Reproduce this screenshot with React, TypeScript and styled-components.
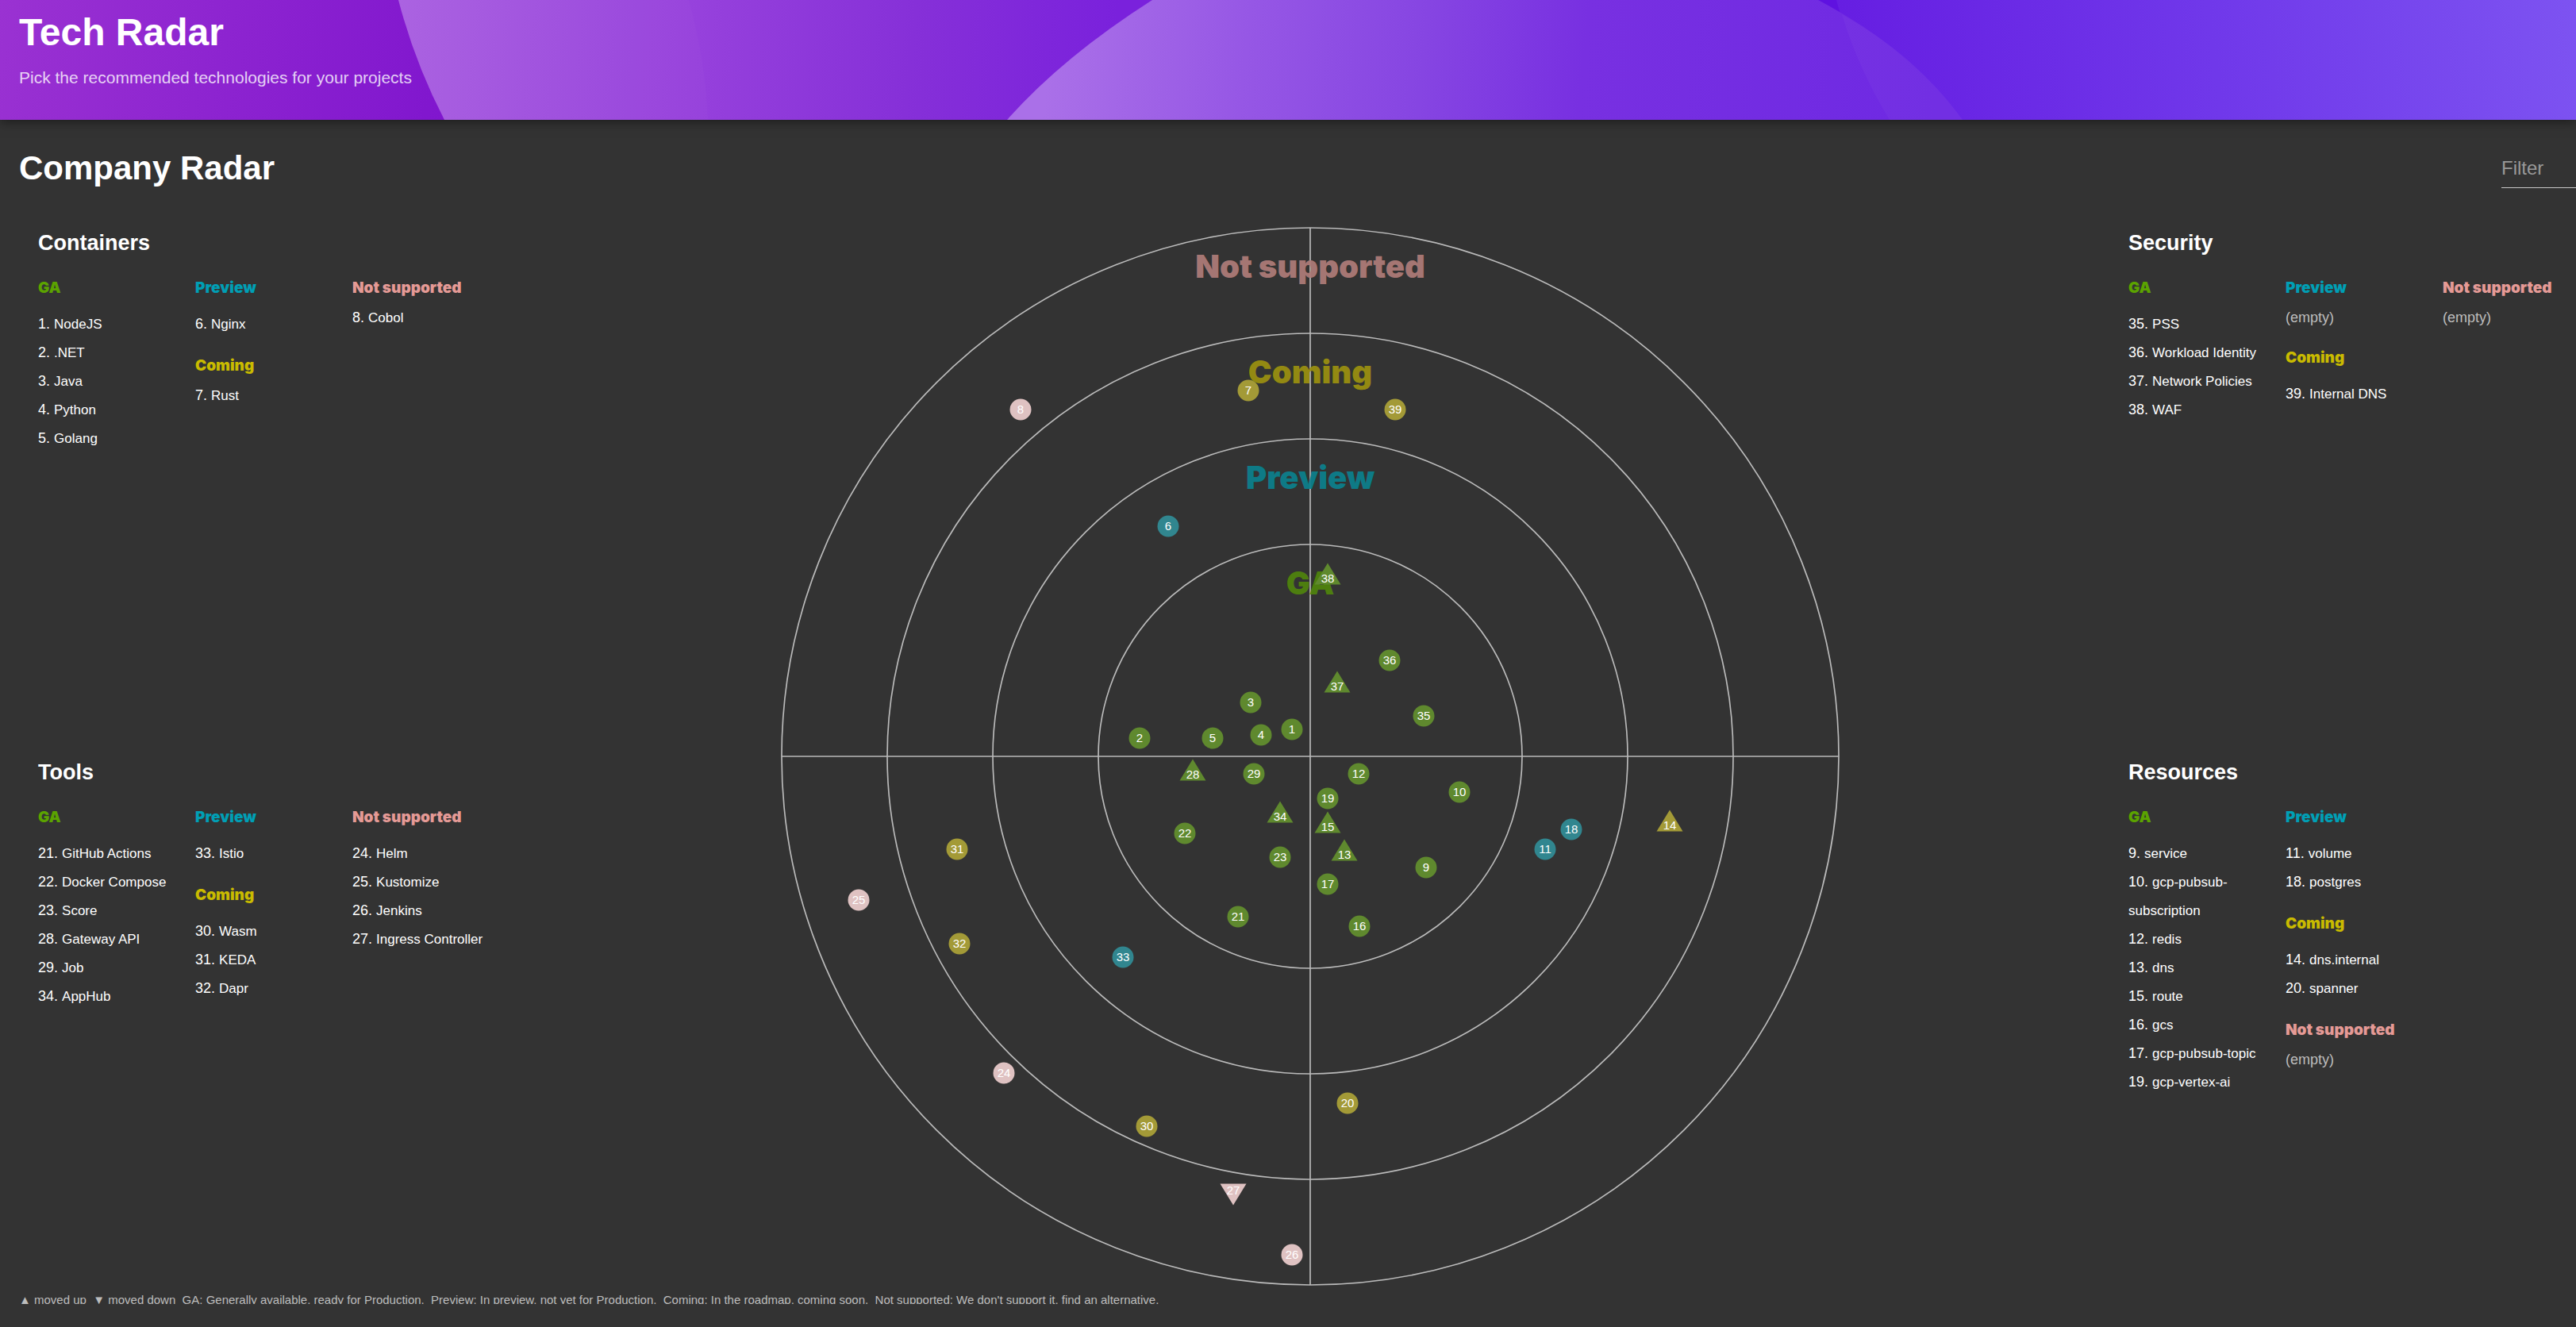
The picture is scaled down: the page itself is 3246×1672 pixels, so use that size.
import React, { useState } from 'react';
import styled, { createGlobalStyle } from 'styled-components';

const GlobalStyle = createGlobalStyle`
  * { box-sizing: border-box; }
  body {
    margin: 0;
    background: #333333;
    color: #ffffff;
    font-family: "Liberation Sans", Arial, Helvetica, sans-serif;
  }
  h1, h2, h3, h4, p, ol { margin: 0; padding: 0; }
`;

type Ring = 'ga' | 'preview' | 'coming' | 'unsupported';
type Move = 'up' | 'down';

const rings: Record<Ring, { name: string; color: string; label: string; blip: string; radius: number }> = {
  unsupported: { name: 'Not supported', color: '#e59a96', label: '#ad7b78', blip: '#dfc2c2', radius: 666 },
  coming: { name: 'Coming', color: '#c9bb00', label: '#9a8f10', blip: '#a39a37', radius: 533 },
  preview: { name: 'Preview', color: '#009fb5', label: '#0c7f8c', blip: '#31868f', radius: 400 },
  ga: { name: 'GA', color: '#5ba300', label: '#4f840d', blip: '#5f892e', radius: 267 },
};

/* ---------- data ---------- */

interface Group {
  ring: Ring;
  items: [number, string][];
  tight?: boolean;
}
interface Quadrant {
  name: string;
  columns: Group[][];
}

const containers: Quadrant = {
  name: 'Containers',
  columns: [
    [{ ring: 'ga', items: [[1, 'NodeJS'], [2, '.NET'], [3, 'Java'], [4, 'Python'], [5, 'Golang']] }],
    [
      { ring: 'preview', items: [[6, 'Nginx']] },
      { ring: 'coming', items: [[7, 'Rust']], tight: true },
    ],
    [{ ring: 'unsupported', items: [[8, 'Cobol']], tight: true }],
  ],
};

const tools: Quadrant = {
  name: 'Tools',
  columns: [
    [
      {
        ring: 'ga',
        items: [[21, 'GitHub Actions'], [22, 'Docker Compose'], [23, 'Score'], [28, 'Gateway API'], [29, 'Job'], [34, 'AppHub']],
      },
    ],
    [
      { ring: 'preview', items: [[33, 'Istio']] },
      { ring: 'coming', items: [[30, 'Wasm'], [31, 'KEDA'], [32, 'Dapr']] },
    ],
    [{ ring: 'unsupported', items: [[24, 'Helm'], [25, 'Kustomize'], [26, 'Jenkins'], [27, 'Ingress Controller']] }],
  ],
};

const security: Quadrant = {
  name: 'Security',
  columns: [
    [{ ring: 'ga', items: [[35, 'PSS'], [36, 'Workload Identity'], [37, 'Network Policies'], [38, 'WAF']] }],
    [
      { ring: 'preview', items: [] },
      { ring: 'coming', items: [[39, 'Internal DNS']] },
    ],
    [{ ring: 'unsupported', items: [] }],
  ],
};

const resources: Quadrant = {
  name: 'Resources',
  columns: [
    [
      {
        ring: 'ga',
        items: [
          [9, 'service'],
          [10, 'gcp-pubsub-subscription'],
          [12, 'redis'],
          [13, 'dns'],
          [15, 'route'],
          [16, 'gcs'],
          [17, 'gcp-pubsub-topic'],
          [19, 'gcp-vertex-ai'],
        ],
      },
    ],
    [
      { ring: 'preview', items: [[11, 'volume'], [18, 'postgres']] },
      { ring: 'coming', items: [[14, 'dns.internal'], [20, 'spanner']] },
      { ring: 'unsupported', items: [] },
    ],
    [],
  ],
};

/* Blip positions, relative to the centre of the radar. */
const blips: { id: number; ring: Ring; x: number; y: number; move?: Move }[] = [
  { id: 1, ring: 'ga', x: -23, y: -34 },
  { id: 2, ring: 'ga', x: -215, y: -23 },
  { id: 3, ring: 'ga', x: -75, y: -68 },
  { id: 4, ring: 'ga', x: -62, y: -27 },
  { id: 5, ring: 'ga', x: -123, y: -23 },
  { id: 6, ring: 'preview', x: -179, y: -290 },
  { id: 7, ring: 'coming', x: -78, y: -461 },
  { id: 8, ring: 'unsupported', x: -365, y: -437 },
  { id: 9, ring: 'ga', x: 146, y: 140 },
  { id: 10, ring: 'ga', x: 188, y: 45 },
  { id: 11, ring: 'preview', x: 296, y: 117 },
  { id: 12, ring: 'ga', x: 61, y: 22 },
  { id: 13, ring: 'ga', x: 43, y: 118, move: 'up' },
  { id: 14, ring: 'coming', x: 453, y: 81, move: 'up' },
  { id: 15, ring: 'ga', x: 22, y: 83, move: 'up' },
  { id: 16, ring: 'ga', x: 62, y: 214 },
  { id: 17, ring: 'ga', x: 22, y: 161 },
  { id: 18, ring: 'preview', x: 329, y: 92 },
  { id: 19, ring: 'ga', x: 22, y: 53 },
  { id: 20, ring: 'coming', x: 47, y: 437 },
  { id: 21, ring: 'ga', x: -91, y: 202 },
  { id: 22, ring: 'ga', x: -158, y: 97 },
  { id: 23, ring: 'ga', x: -38, y: 127 },
  { id: 24, ring: 'unsupported', x: -386, y: 399 },
  { id: 25, ring: 'unsupported', x: -569, y: 181 },
  { id: 26, ring: 'unsupported', x: -23, y: 628 },
  { id: 27, ring: 'unsupported', x: -97, y: 552, move: 'down' },
  { id: 28, ring: 'ga', x: -148, y: 17, move: 'up' },
  { id: 29, ring: 'ga', x: -71, y: 22 },
  { id: 30, ring: 'coming', x: -206, y: 466 },
  { id: 31, ring: 'coming', x: -445, y: 117 },
  { id: 32, ring: 'coming', x: -442, y: 236 },
  { id: 33, ring: 'preview', x: -236, y: 253 },
  { id: 34, ring: 'ga', x: -38, y: 70, move: 'up' },
  { id: 35, ring: 'ga', x: 143, y: -51 },
  { id: 36, ring: 'ga', x: 100, y: -121 },
  { id: 37, ring: 'ga', x: 34, y: -94, move: 'up' },
  { id: 38, ring: 'ga', x: 22, y: -230, move: 'up' },
  { id: 39, ring: 'coming', x: 107, y: -437 },
];

/* ---------- styled parts ---------- */

const Page = styled.div`
  display: flex;
  flex-direction: column;
  min-height: 100vh;
`;

const Header = styled.header`
  position: relative;
  height: 151px;
  padding: 16px 24px;
  background: #7a22dc;
  box-shadow: 0 2px 14px rgba(0, 0, 0, 0.5);
`;

const HeaderArt = styled.svg`
  position: absolute;
  inset: 0;
  width: 100%;
  height: 100%;
`;

const HeaderText = styled.div`
  position: relative;
  display: flex;
  flex-direction: column;
  gap: 16px;
`;

const PageTitle = styled.h1`
  font-size: 48px;
  line-height: 50px;
`;

const Subtitle = styled.p`
  color: rgba(255, 255, 255, 0.8);
  font-size: 21px;
  line-height: 32px;
`;

const Content = styled.main`
  display: flex;
  flex-direction: column;
`;

const TitleBar = styled.div`
  display: flex;
  justify-content: space-between;
  align-items: flex-end;
  margin-top: 36px;
  padding-left: 24px;
`;

const ContentTitle = styled.h2`
  font-size: 42px;
  line-height: 50px;
`;

const FilterLabel = styled.label`
  display: block;
  width: 94px;
`;

const FilterInput = styled.input`
  display: block;
  width: 100%;
  height: 50px;
  padding: 0;
  border: 0;
  border-bottom: 1px solid #c6c6c6;
  border-radius: 0;
  outline: 0;
  background: transparent;
  color: #ffffff;
  font-family: inherit;
  font-size: 24px;
  &::placeholder {
    color: #999999;
    opacity: 1;
  }
`;

const RadarLayout = styled.section`
  display: grid;
  grid-template-columns: 620px minmax(0, 1fr) 564px;
  margin-top: 49px;
`;

const Legend = styled.div<{ $inset?: boolean }>`
  display: grid;
  grid-template-rows: 1fr 1fr;
  padding-left: ${(p) => (p.$inset ? '48px' : '0')};
`;

const QuadrantBox = styled.section`
  min-height: 0;
`;

const QuadrantTitle = styled.h3`
  font-size: 27px;
  line-height: 40px;
`;

const Columns = styled.div`
  display: grid;
  grid-template-columns: repeat(3, 198px);
  margin-top: 26px;
`;

const Column = styled.div`
  display: flex;
  flex-direction: column;
  gap: 24px;
  padding-right: 12px;
`;

const RingTitle = styled.h4<{ $color: string }>`
  color: ${(p) => p.$color};
  font-family: Inter, "Liberation Sans", sans-serif;
  font-size: 19px;
  font-weight: 900;
  line-height: 22px;
  white-space: nowrap;
`;

const List = styled.ol<{ $tight?: boolean }>`
  margin-top: ${(p) => (p.$tight ? '8px' : '16px')};
  list-style: none;
  font-size: 18px;
  line-height: 36px;
`;

const EntryName = styled.span`
  font-size: 17px;
  line-height: 1;
`;

const Empty = styled.p`
  margin-top: 10px;
  color: #bdbdbd;
  font-size: 18px;
  line-height: 32px;
`;

const Radar = styled.svg`
  display: block;
  justify-self: center;
  width: 100%;
  max-width: 1334px;
  height: auto;
`;

const RingLabel = styled.text`
  font-family: Inter, "Liberation Sans", sans-serif;
  font-size: 40px;
  font-weight: 900;
  text-anchor: middle;
`;

const BlipNumber = styled.text`
  fill: #ffffff;
  font-size: 15px;
  text-anchor: middle;
`;

const Notes = styled.footer`
  height: 16px;
  margin: 7px 24px 0;
  overflow: hidden;
  color: #bdbdbd;
  font-size: 15px;
  line-height: 22px;
  white-space: pre;
`;

/* ---------- components ---------- */

function HeaderBackground() {
  return (
    <HeaderArt viewBox="0 0 3246 151" preserveAspectRatio="none" aria-hidden="true">
      <defs>
        <linearGradient id="base" gradientUnits="userSpaceOnUse" x1="0" y1="0" x2="560" y2="140">
          <stop offset="0" stopColor="#9a32d2" />
          <stop offset="1" stopColor="#8016ce" />
        </linearGradient>
        <linearGradient id="first" gradientUnits="userSpaceOnUse" x1="500" y1="0" x2="1400" y2="100">
          <stop offset="0" stopColor="#aa60e1" />
          <stop offset="0.42" stopColor="#9641dc" />
          <stop offset="0.72" stopColor="#8630d8" />
          <stop offset="1" stopColor="#7a21dc" />
        </linearGradient>
        <linearGradient id="second" gradientUnits="userSpaceOnUse" x1="1330" y1="0" x2="2440" y2="120">
          <stop offset="0" stopColor="#aa70e8" />
          <stop offset="0.22" stopColor="#9657e5" />
          <stop offset="0.42" stopColor="#8645e2" />
          <stop offset="0.6" stopColor="#7830e1" />
          <stop offset="1" stopColor="#6e29e3" />
        </linearGradient>
        <linearGradient id="third" gradientUnits="userSpaceOnUse" x1="2330" y1="120" x2="3246" y2="0">
          <stop offset="0" stopColor="#661ee2" />
          <stop offset="0.5" stopColor="#7038ea" />
          <stop offset="1" stopColor="#7d53f1" />
        </linearGradient>
      </defs>
      <rect width="700" height="151" fill="url(#base)" />
      <path d="M502 0 Q523 80 560 151 H1500 V0 Z" fill="url(#first)" />
      <path d="M502 0 Q523 80 560 151 H892 Q889 75 868 0 Z" fill="#ffffff" fillOpacity="0.02" />
      <path d="M2270 0 H3246 V151 H2360 Z" fill="#5f12e0" />
      <path d="M2314 0 Q2335 80 2381 151 H3246 V0 Z" fill="url(#third)" />
      <path d="M1452 0 Q1339 72 1269 151 H2473 Q2408 62 2291 0 Z" fill="url(#second)" />
      <path d="M2321 18 Q2341 85 2381 151 H2473 Q2415 70 2321 18 Z" fill="#ffffff" fillOpacity="0.03" />
    </HeaderArt>
  );
}

function RingGroup({ group }: { group: Group }) {
  const ring = rings[group.ring];
  return (
    <div>
      <RingTitle $color={ring.color}>{ring.name}</RingTitle>
      {group.items.length === 0 ? (
        <Empty>(empty)</Empty>
      ) : (
        <List $tight={group.tight}>
          {group.items.map(([id, name]) => (
            <li key={id}>
              {id}. <EntryName>{name}</EntryName>
            </li>
          ))}
        </List>
      )}
    </div>
  );
}

function QuadrantLegend({ quadrant }: { quadrant: Quadrant }) {
  return (
    <QuadrantBox>
      <QuadrantTitle>{quadrant.name}</QuadrantTitle>
      <Columns>
        {quadrant.columns.map((groups, i) => (
          <Column key={i}>
            {groups.map((g) => (
              <RingGroup key={g.ring} group={g} />
            ))}
          </Column>
        ))}
      </Columns>
    </QuadrantBox>
  );
}

function RadarPlot() {
  const order: Ring[] = ['unsupported', 'coming', 'preview', 'ga'];
  return (
    <Radar viewBox="-667 -667 1334 1334" role="img" aria-label="Company Radar">
      <g fill="none" stroke="#bbbbbb" strokeWidth="1.67">
        {order.map((r) => (
          <circle key={r} r={rings[r].radius} />
        ))}
        <path d="M0 -666 V666 M-666 0 H666" />
      </g>
      {order.map((r) => (
        <RingLabel key={r} y={63 - rings[r].radius} fill={rings[r].label} fillOpacity="0.95">
          {rings[r].name}
        </RingLabel>
      ))}
      {blips.map((b) => (
        <g key={b.id} transform={`translate(${b.x} ${b.y})`}>
          {!b.move && <circle r="13.5" fill={rings[b.ring].blip} />}
          {b.move === 'up' && <path d="M0 -13.5 L16.5 13.5 H-16.5 Z" fill={rings[b.ring].blip} />}
          {b.move === 'down' && <path d="M0 13.5 L16.5 -13.5 H-16.5 Z" fill={rings[b.ring].blip} />}
          <BlipNumber y={b.move === 'up' ? 11 : b.move === 'down' ? 0 : 5}>{b.id}</BlipNumber>
        </g>
      ))}
    </Radar>
  );
}

export default function App() {
  const [filter, setFilter] = useState('');
  return (
    <Page>
      <GlobalStyle />
      <Header>
        <HeaderBackground />
        <HeaderText>
          <PageTitle>Tech Radar</PageTitle>
          <Subtitle>Pick the recommended technologies for your projects</Subtitle>
        </HeaderText>
      </Header>
      <Content>
        <TitleBar>
          <ContentTitle>Company Radar</ContentTitle>
          <FilterLabel>
            <FilterInput
              type="text"
              aria-label="Filter"
              placeholder="Filter"
              value={filter}
              onChange={(e) => setFilter(e.target.value)}
            />
          </FilterLabel>
        </TitleBar>
        <RadarLayout>
          <Legend $inset>
            <QuadrantLegend quadrant={containers} />
            <QuadrantLegend quadrant={tools} />
          </Legend>
          <RadarPlot />
          <Legend>
            <QuadrantLegend quadrant={security} />
            <QuadrantLegend quadrant={resources} />
          </Legend>
        </RadarLayout>
        <Notes>
          {
            "▲ moved up  ▼ moved down  GA: Generally available, ready for Production.  Preview: In preview, not yet for Production.  Coming: In the roadmap, coming soon.  Not supported: We don't support it, find an alternative."
          }
        </Notes>
      </Content>
    </Page>
  );
}
